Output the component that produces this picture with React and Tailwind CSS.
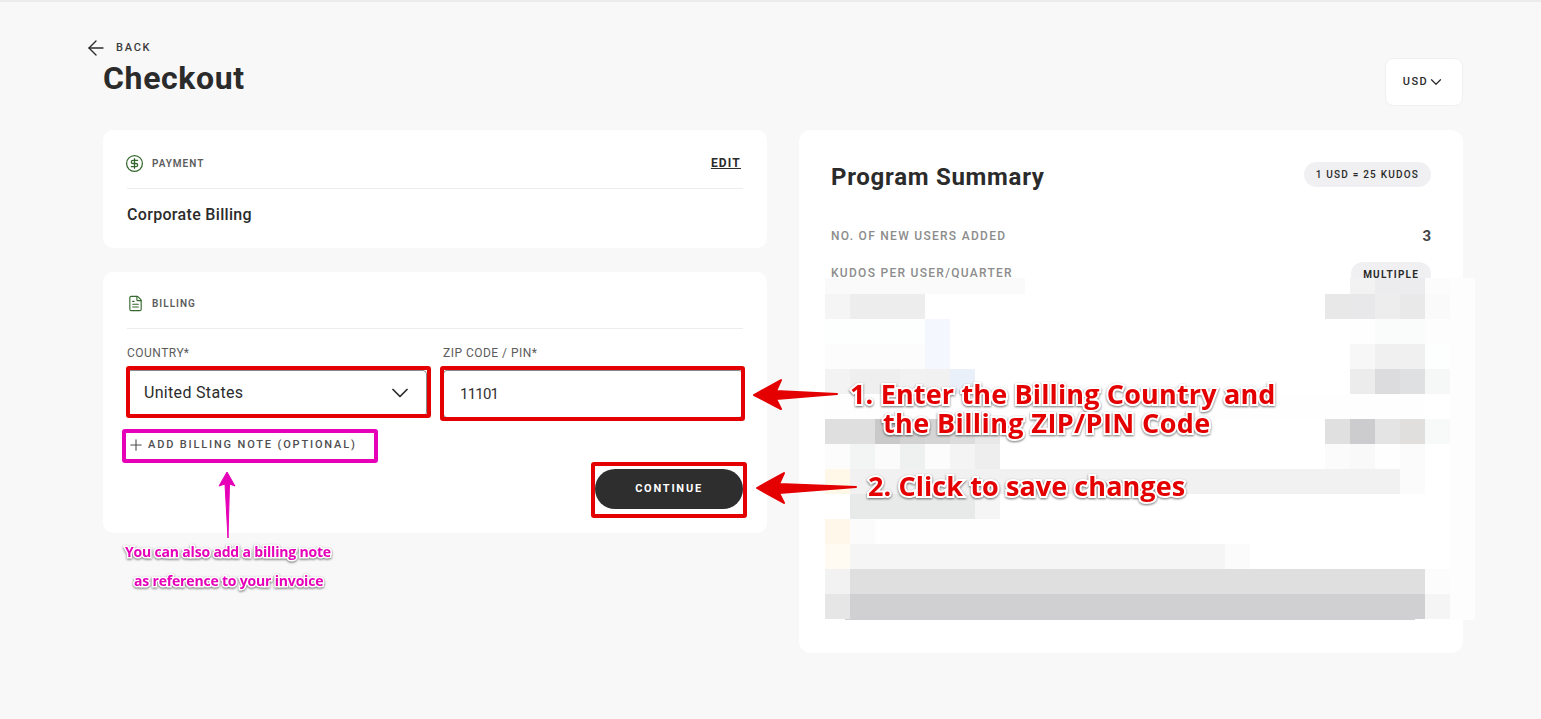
import React from "react";
import { ArrowLeft, ChevronDown, CircleDollarSign, FileText, Plus } from "lucide-react";

// blurred part of the summary card, [first column, colours...] per row
const BLUR_ROWS = [
  { h: 16, cells: [[0, "#fafafa", "#fafafa", "#fafafa", "#fafafa", "#fafafa", "#fafafa", "#fafafa", "#fafafa"], [21, "#f2f2f2", "#ececee", "#ececee", "#fcfcfc"]] },
  { h: 25, cells: [[0, "#f5f5f5", "#ededed", "#ededed", "#ededed"], [20, "#e8e8e8", "#e8e8ea", "#ededed", "#e9e9e9", "#fafafa"]] },
  { h: 25, cells: [[0, "#fdfefe", "#fdfefe", "#fdfefe", "#fdfefe", "#f4f8fe"], [21, "#fefefe", "#fafbfb", "#fafbfb", "#fdfdfd"]] },
  { h: 25, cells: [[0, "#fcfcfc", "#fcfcfc", "#fcfcfc", "#fcfcfc", "#f4f8fe"], [21, "#f7f7f7", "#f0f0f0", "#f0f0f0", "#fdfefe"]] },
  { h: 25, cells: [[0, "#f3f3f3", "#efefef", "#efefef", "#f2f2f2", "#f1f1f1", "#e9f0fa"], [21, "#ececec", "#dcdcde", "#dfe0e1", "#f6f7f7"]] },
  { h: 25, cells: [[0, ...Array(24).fill("#fdfefd")]] },
  { h: 25, cells: [[0, "#dfdfdf", "#dfdfdf", "#c9c9c9", "#d2d2d2", "#d5d5d5", "#dcdcdc", "#e8e8e8"], [20, "#e0e0e0", "#ccccce", "#e4e4e4", "#e0dfde", "#f8f9f9"]] },
  { h: 25, cells: [[0, "#fcfcfc", "#f3f4f4", "#fbfbfb", "#eff0f0", "#fcfcfc", "#f4f4f4", "#eeeeee"], [20, "#fbfbfb", "#f9f9f9", "#fefefe", "#fbfbfb"]] },
  { h: 25, cells: [[0, "#fff7e8", ...Array(22).fill("#f1f1f1"), "#fbfbfb"]] },
  { h: 25, cells: [[1, "#e8e9e9", "#e8e9e9", "#e8e9e9", "#e8e9e9", "#e8e9e9", "#f5f5f5"]] },
  { h: 25, cells: [[0, "#fff8ea", "#fbfbfb", ...Array(13).fill("#fefefe")]] },
  { h: 25, cells: [[0, "#fffbf2", ...Array(15).fill("#f5f5f5"), "#fbfbfb"]] },
  { h: 25, cells: [[0, "#f2f2f2", ...Array(23).fill("#dfdfe0"), "#fcfcfc"]] },
  { h: 25, cells: [[0, "#e6e6e6", ...Array(23).fill("#d0d0d2"), "#f5f5f5"]] },
];

function BlurBlock() {
  return (
    <div className="absolute left-[26px] top-[148px] w-[650px] bg-white">
      {BLUR_ROWS.map((row, i) => (
        <div key={i} className="relative" style={{ height: row.h }}>
          {row.cells.map(([start, ...colors]) =>
            colors.map((c, j) => (
              <span
                key={start + j}
                className="absolute top-0 bottom-0 w-[25px]"
                style={{ left: (start + j) * 25, background: c }}
              />
            ))
          )}
        </div>
      ))}
      <div className="absolute right-0 top-0 bottom-0 w-[25px] bg-[#fdfdfd]" />
      <div className="ml-[20px] w-[570px] h-px bg-[#cfcfd2]" />
    </div>
  );
}

function SectionHead({ icon, title, right, className }) {
  return (
    <div className={`flex items-center justify-between border-b border-[#ededed] ${className}`}>
      <div className="flex items-center gap-[8px]">
        {icon}
        <span className="text-[10px] font-semibold tracking-[0.1em] text-[#5c5c5c]">{title}</span>
      </div>
      {right}
    </div>
  );
}

// red/magenta boxes and arrows that were drawn on top of the screenshot
function Markup() {
  return (
    <svg className="absolute inset-0 pointer-events-none" width="1541" height="719" viewBox="0 0 1541 719" fill="none">
      <g stroke="#e40000" strokeWidth="4">
        <rect x="128" y="368" width="301" height="48" rx="1" />
        <rect x="442" y="368" width="301" height="51" rx="1" />
        <rect x="593" y="464" width="152" height="52" rx="1" />
      </g>
      <rect x="124" y="431" width="252" height="30" rx="1" stroke="#e600b8" strokeWidth="4" />
      <g fill="#e40000" stroke="#e40000" strokeWidth="2" strokeLinejoin="round">
        <path d="M754 395 L781 380 L776 391 L837 394 L776 399 L781 409 Z" />
        <path d="M757 488 L784 473 L779 484 L856 487 L779 493 L784 503 Z" />
      </g>
      <path d="M227 472 L235 486 L229.500 484 L228 538 L225 484 L219 486 Z" fill="#e600b8" stroke="#e600b8" strokeWidth="1" strokeLinejoin="round" />
    </svg>
  );
}

const redNote =
  "absolute whitespace-nowrap font-['Open_Sans'] font-bold text-[27px] leading-[29px] text-[#e40000] [-webkit-text-stroke:4px_#fff] [paint-order:stroke_fill] [filter:drop-shadow(0_1px_1px_rgba(0,0,0,0.55))]";
const pinkNote =
  "absolute whitespace-nowrap font-['Open_Sans'] font-bold text-[14px] leading-[20px] tracking-[-0.18px] text-[#e600b8] [-webkit-text-stroke:3px_#fff] [paint-order:stroke_fill] [filter:drop-shadow(0_1px_1px_rgba(0,0,0,0.55))]";

export default function App() {
  return (
    <div className="relative min-h-[719px] overflow-hidden bg-[#f8f8f8] pl-[103px] pr-[78px] font-['Roboto',sans-serif] text-[#2b2b2b]">
      <div className="absolute inset-x-0 top-0 h-[2px] bg-[#ebebeb]" />

      <div className="flex justify-between h-[130px]">
        <div className="pt-[41px]">
          <div className="flex items-center gap-[8px] -ml-[19px] h-[15px]">
            <ArrowLeft size={24} strokeWidth={1.4} className="-translate-y-[1px]" />
            <span className="text-[11px] font-medium tracking-[0.16em] text-[#3c3c3c]">BACK</span>
          </div>
          <h1 className="text-[32px] leading-[44px] font-bold tracking-[0.02em]">Checkout</h1>
        </div>
        <div className="mt-[58px] flex items-center justify-center w-[78px] h-[48px] rounded-[8px] bg-white border border-[#f0f0f0] text-[11px] font-medium tracking-[0.14em]">
          <span className="pt-[1px]">USD</span>
          <ChevronDown size={18} strokeWidth={1.6} className="-ml-[1px]" />
        </div>
      </div>

      <div className="grid grid-cols-2 gap-[32px] items-start">
        <div className="flex flex-col gap-[24px]">
          <section className="h-[118px] rounded-[10px] bg-white px-[24px]">
            <SectionHead
              className="h-[59px] pt-[8px]"
              icon={<CircleDollarSign size={19} strokeWidth={1.6} className="text-[#35682f] -ml-[2px]" />}
              title="PAYMENT"
              right={<a className="text-[12px] font-bold tracking-[0.1em] underline mr-[2px]">EDIT</a>}
            />
            <p className="mt-[16px] text-[16px] leading-[20px] font-medium tracking-[0.02em]">Corporate Billing</p>
          </section>

          <section className="h-[261px] rounded-[10px] bg-white px-[24px]">
            <SectionHead
              className="h-[57px] pt-[6px]"
              icon={<FileText size={17} strokeWidth={1.6} className="text-[#35682f]" />}
              title="BILLING"
            />
            <div className="grid grid-cols-2 gap-[16px] mt-[16px]">
              <div>
                <label className="block text-[12px] leading-[16px] tracking-[0.04em] text-[#5c5c5c]">COUNTRY*</label>
                <div className="mt-[9px] h-[46px] flex items-center justify-between pl-[16px] pr-[12px] rounded-[4px] border border-[#888] text-[16px] tracking-[0.02em]">
                  United States
                  <ChevronDown size={28} strokeWidth={1.5} />
                </div>
              </div>
              <div>
                <label className="block text-[12px] leading-[16px] tracking-[0.04em] text-[#5c5c5c]">ZIP CODE / PIN*</label>
                <div className="mt-[9px] h-[48px] flex items-center pl-[16px] rounded-[4px] border border-[#888] text-[15px] tracking-[-0.8px] text-[#333]">11101</div>
              </div>
            </div>
            <div className="flex items-center gap-[3px] mt-[19px] h-[16px] text-[11px] font-medium tracking-[0.167em] text-[#4f4f4f]">
              <Plus size={18} strokeWidth={1.5} />
              ADD BILLING NOTE (OPTIONAL)
            </div>
            <div className="flex justify-end mt-[16px]">
              <button className="w-[148px] h-[40px] rounded-full bg-[#2e2e2e] text-white text-[11px] font-bold tracking-[0.16em]">
                CONTINUE
              </button>
            </div>
          </section>
        </div>

        <section className="relative h-[523px] rounded-[12px] bg-white px-[32px] pt-[32px]">
          <div className="flex items-start justify-between h-[50px]">
            <h2 className="text-[24px] leading-[30px] font-bold tracking-[0.03em]">Program Summary</h2>
            <span className="h-[25px] flex items-center px-[12px] rounded-full bg-[#f0f0f2] text-[10px] font-medium tracking-[0.12em]">
              1 USD = 25 KUDOS
            </span>
          </div>
          <div className="flex justify-between items-center mt-[14px] h-[20px]">
            <span className="text-[12px] font-medium tracking-[0.107em] text-[#8c8c8c]">NO. OF NEW USERS ADDED</span>
            <span className="text-[15px] font-bold text-[#444]">3</span>
          </div>
          <div className="flex justify-between items-start mt-[16px]">
            <span className="text-[12px] font-medium tracking-[0.107em] text-[#8c8c8c] mt-[2px]">KUDOS PER USER/QUARTER</span>
            <span className="h-[25px] flex items-center px-[12px] rounded-[12px] bg-[#f0f0f2] text-[10px] font-bold tracking-[0.12em]">
              MULTIPLE
            </span>
          </div>
          <BlurBlock />
        </section>
      </div>

      <Markup />
      <div className={`${redNote} left-[850px] top-[379px]`}>
        <span className="tracking-[0.16px]">1. Enter the Billing Country and</span>
        <br />
        <span className="ml-[33px] tracking-[0.4px]">the Billing ZIP/PIN Code</span>
      </div>
      <div className={`${redNote} left-[868px] top-[471px] tracking-[0.08px]`}>2. Click to save changes</div>
      <div className={`${pinkNote} left-[125px] top-[542px]`}>You can also add a billing note</div>
      <div className={`${pinkNote} left-[134px] top-[571px]`}>as reference to your invoice</div>
    </div>
  );
}
